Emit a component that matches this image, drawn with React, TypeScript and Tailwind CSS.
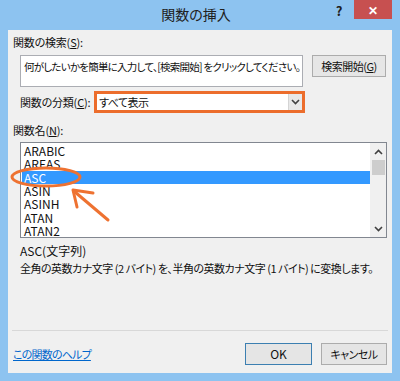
import React from "react";

const items = ["ARABIC", "AREAS", "ASC", "ASIN", "ASINH", "ATAN", "ATAN2"];

function Chevron({ up = false }: { up?: boolean }) {
  return (
    <svg width="9" height="6" viewBox="0 0 9 6">
      <polyline
        points={up ? "1,5 4.5,1.5 8,5" : "1,1 4.5,4.5 8,1"}
        fill="none"
        stroke="#404040"
        strokeWidth="1.6"
      />
    </svg>
  );
}

export default function App() {
  return (
    <div className="relative w-[400px] h-[381px] bg-[#8dc3f0] flex flex-col overflow-hidden text-[11px] tracking-[-0.5px] text-[#111] font-['Noto_Sans_CJK_JP',sans-serif] [font-feature-settings:'palt']">
      {/* Title bar */}
      <div className="h-[30px] flex items-start">
        <div className="flex-1" />
        <div className="pt-[4px] text-[14px] tracking-normal leading-[20px] text-[#202020]">関数の挿入</div>
        <div className="flex-1 flex justify-end items-start pr-[8px]">
          <span className="mt-[2px] mr-[12px] text-[13px] leading-[18px] font-bold text-[#202020]">?</span>
          <div className="w-[38px] h-[19px] bg-[#c75050] flex items-center justify-center text-white text-[12px] font-bold leading-none">
            ✕
          </div>
        </div>
      </div>

      {/* Content */}
      <div className="mx-[8px] mb-[8px] flex-1 bg-[#f0f0f0] flex flex-col">
        <div className="mt-[5px] ml-[5px] leading-[14px] tracking-[-0.2px]">
          関数の検索(<span className="underline">S</span>):
        </div>

        <div className="mt-[6px] flex items-start pl-[12px]">
          <div className="w-[283px] h-[32px] bg-white border border-[#abadb3] pl-[3px] pt-[4px] leading-[14px] text-[10.5px] tracking-[-0.75px] whitespace-nowrap overflow-hidden">
            何がしたいかを簡単に入力して、[検索開始] をクリックしてください。
          </div>
          <div className="ml-[9px] w-[74px] h-[22px] border border-[#acacac] bg-[#e6e6e6] flex items-center justify-center leading-none">
            検索開始(<span className="underline">G</span>)
          </div>
        </div>

        <div className="mt-[4px] flex items-center pl-[12px]">
          <span className="w-[71px] leading-[14px] tracking-[-0.2px] whitespace-nowrap">
            関数の分類(<span className="underline">C</span>):
          </span>
          <div className="ml-[3px] w-[211px] h-[22px] border-[3px] border-[#ec6d2c] bg-white flex items-stretch">
            <div className="flex-1 pl-[2px] flex items-center leading-none">すべて表示</div>
            <div className="w-[14px] bg-[#e8e8e8] border-l border-[#d4d4d4] flex items-center justify-center">
              <Chevron />
            </div>
          </div>
        </div>

        <div className="mt-[10px] ml-[5px] leading-[14px] tracking-[-0.2px]">
          関数名(<span className="underline">N</span>):
        </div>

        <div className="mt-[5px] ml-[12px] mr-[5px] h-[96px] border border-[#828790] bg-white flex">
          <div className="flex-1 pt-[1.5px] pl-[1px]">
            {items.map((it) => (
              <div
                key={it}
                className={`h-[13.3px] pl-[2px] flex items-center text-[12px] tracking-normal leading-none ${
                  it === "ASC" ? "bg-[#3399ff] text-white" : ""
                }`}
              >
                {it}
              </div>
            ))}
          </div>
          <div className="w-[16px] bg-[#f0f0f0] flex flex-col items-center">
            <div className="h-[17px] flex items-center justify-center">
              <Chevron up />
            </div>
            <div className="w-[13px] h-[15px] bg-[#cdcdcd]" />
            <div className="flex-1" />
            <div className="h-[17px] flex items-center justify-center">
              <Chevron />
            </div>
          </div>
        </div>

        <div className="mt-[6px] ml-[12px] leading-[14px] text-[12px] tracking-normal">ASC(文字列)</div>
        <div className="mt-[3px] ml-[12px] leading-[14px] whitespace-nowrap">
          全角の英数カナ文字 (2 バイト) を、半角の英数カナ文字 (1 バイト) に変換します。
        </div>

        <div className="flex-1" />

        <div className="mx-[4px] border-t border-[#d8d8d8]" />
        <div className="pt-[12px] pb-[8px] flex items-center">
          <span className="ml-[5px] text-[#0066cc] underline leading-[14px] tracking-[-0.8px]">この関数のヘルプ</span>
          <div className="flex-1" />
          <div className="w-[67px] h-[22px] border border-[#3c7fb1] bg-[#e5e5e5] flex items-center justify-center leading-none text-[12px] tracking-normal">
            OK
          </div>
          <div className="ml-[9px] mr-[5px] w-[66px] h-[22px] border border-[#acacac] bg-[#e5e5e5] flex items-center justify-center leading-none">
            キャンセル
          </div>
        </div>
      </div>

      {/* Annotation overlay */}
      <svg className="absolute left-0 top-0 pointer-events-none" width="400" height="381">
        <ellipse cx="46" cy="177" rx="34" ry="9" fill="none" stroke="#ee7231" strokeWidth="3" />
        <line x1="108" y1="220" x2="75" y2="192" stroke="#ee7231" strokeWidth="3" strokeLinecap="round" />
        <polyline points="93,193 73,190 77,207" fill="none" stroke="#ee7231" strokeWidth="3" strokeLinecap="round" strokeLinejoin="round" />
      </svg>
    </div>
  );
}
